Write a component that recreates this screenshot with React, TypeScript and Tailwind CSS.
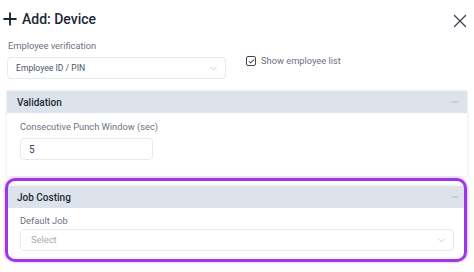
import { Check, ChevronDown, Minus, Plus, X } from "lucide-react";

function SelectBox({ value, placeholder, className }: { value?: string; placeholder?: string; className?: string }) {
  return (
    <div
      className={`h-[22px] flex items-center justify-between rounded-[4px] border border-[#e6e9ee] bg-white pl-[8px] pr-[6px] ${className ?? ""}`}
    >
      {value ? (
        <span className="text-[8.6px] text-[#4b5563]">{value}</span>
      ) : (
        <span className="text-[9.3px] text-[#a3a9b1]">{placeholder}</span>
      )}
      <ChevronDown className="size-[11px] text-[#b5bac1]" strokeWidth={1.6} />
    </div>
  );
}

function Panel({ title, children }: { title: string; children: React.ReactNode }) {
  return (
    <div className="bg-white shadow-[0_0_3px_rgba(0,0,0,0.13)]">
      <div className="h-[22px] flex items-center justify-between bg-[#dce3ea] pl-[10px] pr-[7px]">
        <span className="text-[10px] font-medium text-[#1f2a37]">{title}</span>
        <Minus className="size-[10px] text-[#9aa1aa]" strokeWidth={1.6} />
      </div>
      {children}
    </div>
  );
}

export default function App() {
  return (
    <div
      className="relative w-[474px] h-[272px] overflow-hidden bg-white"
      style={{ fontFamily: "Roboto, 'Noto Sans', sans-serif" }}
    >
      {/* Title bar */}
      <div className="h-[38px] flex items-center justify-between pl-[4px] pr-[3px]">
        <div className="flex items-center gap-[2px]">
          <Plus className="size-[20px] -ml-[4px] text-[#1c2836]" strokeWidth={2.3} />
          <span className="text-[14px] font-medium text-[#1c2836]">Add: Device</span>
        </div>
        <X className="size-[22px] text-[#3a4350] mt-[4px]" strokeWidth={1.4} />
      </div>

      {/* Verification row */}
      <div className="flex items-end pl-[7px] pt-[2px]">
        <div className="w-[219px]">
          <div className="text-[9.3px] leading-[12px] text-[#6b7280] pl-[1px]">Employee verification</div>
          <SelectBox value="Employee ID / PIN" className="mt-[5px]" />
        </div>
        <div className="flex items-center gap-[5px] ml-[20px] mb-[11px]">
          <div className="size-[10px] rounded-[2px] border-[1.5px] border-[#3d4653] flex items-center justify-center">
            <Check className="size-[7px] text-[#3d4653]" strokeWidth={3.5} />
          </div>
          <span className="text-[9.3px] text-[#6b7280]">Show employee list</span>
        </div>
      </div>

      <div className="px-[7px] mt-[12px] flex flex-col gap-[10px]">
        <Panel title="Validation">
          <div className="px-[13px] pt-[8px] pb-[16px]">
            <div className="text-[9.3px] leading-[12px] text-[#6b7280]">Consecutive Punch Window (sec)</div>
            <div className="mt-[5px] w-[133px] h-[22px] flex items-center rounded-[4px] border border-[#e6e9ee] px-[8px] text-[10px] text-[#374151]">
              5
            </div>
          </div>
        </Panel>

        <Panel title="Job Costing">
          <div className="px-[13px] pt-[7px] pb-[6px]">
            <div className="text-[9.3px] leading-[12px] text-[#6b7280]">Default Job</div>
            <SelectBox placeholder="Select" className="mt-[2px] pl-[10px]" />
          </div>
        </Panel>
      </div>

      {/* Highlight annotation */}
      <div className="absolute left-[5px] top-[178px] w-[462px] h-[84px] rounded-[10px] border-[3px] border-[#9b36ea] shadow-[0_0_3px_rgba(155,54,234,0.5)] pointer-events-none" />
    </div>
  );
}
